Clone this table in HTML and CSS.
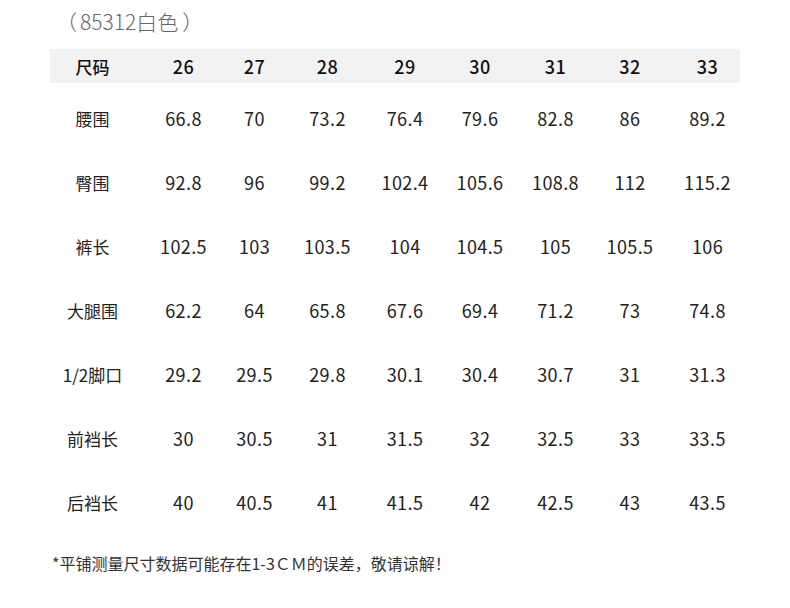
FILE: index.html
```html
<!DOCTYPE html>
<html lang="zh-CN">
<head>
<meta charset="utf-8">
<title>尺码表</title>
<link rel="stylesheet" href="styles.css">
</head>
<body>
<div class="page">
  <div class="title"><span class="paren-open">（</span>85312白色<span class="paren-close">）</span></div>
  <div class="table">
    <div class="row head">
      <div class="cell label">尺码</div><div class="cell">26</div><div class="cell">27</div><div class="cell">28</div><div class="cell">29</div><div class="cell">30</div><div class="cell">31</div><div class="cell">32</div><div class="cell">33</div>
    </div>
    <div class="row">
      <div class="cell label">腰围</div><div class="cell">66.8</div><div class="cell">70</div><div class="cell">73.2</div><div class="cell">76.4</div><div class="cell">79.6</div><div class="cell">82.8</div><div class="cell">86</div><div class="cell">89.2</div>
    </div>
    <div class="row">
      <div class="cell label">臀围</div><div class="cell">92.8</div><div class="cell">96</div><div class="cell">99.2</div><div class="cell">102.4</div><div class="cell">105.6</div><div class="cell">108.8</div><div class="cell">112</div><div class="cell">115.2</div>
    </div>
    <div class="row">
      <div class="cell label">裤长</div><div class="cell">102.5</div><div class="cell">103</div><div class="cell">103.5</div><div class="cell">104</div><div class="cell">104.5</div><div class="cell">105</div><div class="cell">105.5</div><div class="cell">106</div>
    </div>
    <div class="row">
      <div class="cell label">大腿围</div><div class="cell">62.2</div><div class="cell">64</div><div class="cell">65.8</div><div class="cell">67.6</div><div class="cell">69.4</div><div class="cell">71.2</div><div class="cell">73</div><div class="cell">74.8</div>
    </div>
    <div class="row">
      <div class="cell label">1/2脚口</div><div class="cell">29.2</div><div class="cell">29.5</div><div class="cell">29.8</div><div class="cell">30.1</div><div class="cell">30.4</div><div class="cell">30.7</div><div class="cell">31</div><div class="cell">31.3</div>
    </div>
    <div class="row">
      <div class="cell label">前裆长</div><div class="cell">30</div><div class="cell">30.5</div><div class="cell">31</div><div class="cell">31.5</div><div class="cell">32</div><div class="cell">32.5</div><div class="cell">33</div><div class="cell">33.5</div>
    </div>
    <div class="row">
      <div class="cell label">后裆长</div><div class="cell">40</div><div class="cell">40.5</div><div class="cell">41</div><div class="cell">41.5</div><div class="cell">42</div><div class="cell">42.5</div><div class="cell">43</div><div class="cell">43.5</div>
    </div>
  </div>
  <div class="note">*平铺测量尺寸数据可能存在1-3ＣＭ的误差，敬请谅解！</div>
</div>
</body>
</html>
```

FILE: styles.css
```css
html, body {
  margin: 0;
  padding: 0;
  background: #ffffff;
}

body {
  font-family: "Noto Sans CJK SC", "Noto Sans", sans-serif;
  color: #222222;
}

.page {
  width: 790px;
  height: 608px;
  padding: 7px 0 0 50px;
  box-sizing: border-box;
}

.title {
  font-size: 21px;
  line-height: 28px;
  font-weight: 300;
  color: #666666;
  margin-left: 6px;
  height: 42px;
}

.paren-open {
  margin-right: 3px;
}

.paren-close {
  margin-left: 4px;
}

.table {
  width: 690px;
}

.row {
  display: grid;
  grid-template-columns: 85px 97px 45px 101px 54px 96px 55px 94px 61px;
  align-items: center;
  height: 64px;
  font-size: 17px;
}

.row.head {
  height: 34px;
  background: #f2f2f2;
  margin-bottom: 3px;
  font-weight: 500;
  color: #111111;
}

.cell {
  text-align: center;
  white-space: nowrap;
  font-size: 18px;
  letter-spacing: 0.4px;
}

.cell.label {
  font-size: 17px;
  letter-spacing: 0;
}

.note {
  margin-top: 18px;
  font-size: 16px;
  line-height: 22px;
  color: #333333;
  margin-left: 2px;
}
```
